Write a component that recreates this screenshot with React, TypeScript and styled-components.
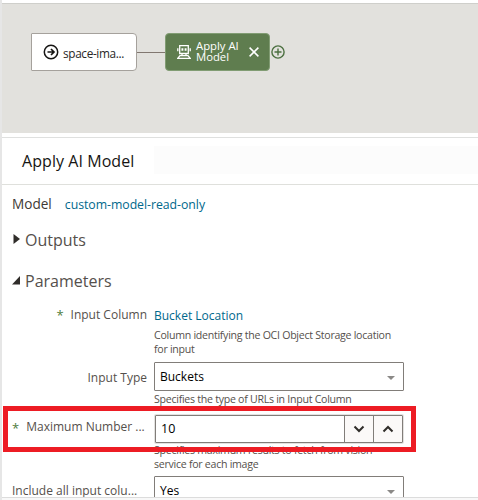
import React from "react";
import styled, { createGlobalStyle } from "styled-components";

const Global = createGlobalStyle`
  * { box-sizing: border-box; }
  body { margin: 0; background: #fff; font-family: "Open Sans", "Noto Sans", sans-serif; }
`;

const Page = styled.main`
  width: 478px;
  height: 500px;
  overflow: hidden;
  display: flex;
  flex-direction: column;
  border-left: 2px solid #e6e6e6;
  background: #fff;
`;

const Text = styled.span<{ $size?: number; $track?: number; $color?: string; $line?: number }>`
  display: block;
  white-space: nowrap;
  font-size: ${(p) => p.$size ?? 12}px;
  letter-spacing: ${(p) => p.$track ?? 0}px;
  color: ${(p) => p.$color ?? "#55504c"};
  line-height: ${(p) => p.$line ?? 18}px;
`;

const HelpText = styled.span`
  display: block;
  white-space: nowrap;
  font-size: 10.6px;
  letter-spacing: -0.27px;
  line-height: 14px;
  color: #55504c;
`;

const Canvas = styled.section`
  flex: none;
  height: 130px;
  margin-top: 3px;
  border-top: 1px solid #cfcfcb;
  background: #e2e1dd;
  display: flex;
  align-items: flex-start;
  padding: 29px 0 0 29px;
`;

const SourceNode = styled.div`
  width: 106px;
  height: 38px;
  border: 1px solid #a5a19c;
  border-radius: 1px 4px 4px 1px;
  background: #fff;
  display: flex;
  align-items: center;
  padding-left: 11px;
  gap: 4px;
`;

const SourceLabel = styled.div`
  padding-top: 2px;
`;

const Connector = styled.div`
  width: 28px;
  height: 1px;
  margin-top: 19px;
  background: #817770;
`;

const ModelNode = styled.div`
  width: 105px;
  height: 38px;
  border: 1px solid #819c73;
  border-radius: 4px;
  background: #5f7d4f;
  display: flex;
  align-items: center;
  padding-left: 11px;
`;

const NodeLabel = styled.div`
  width: 53px;
  margin-left: 5px;
  padding-bottom: 2px;
`;

const AddIcon = styled.div`
  display: flex;
  margin: 12px 0 0 1px;
`;

const TitleBar = styled.header`
  flex: none;
  height: 48px;
  margin-top: 4px;
  border-top: 1px solid #dfe0df;
  border-bottom: 1px solid #dfe0dc;
  display: flex;
  padding: 8px 0 0 20px;
`;

const Title = styled.h1`
  width: 132px;
  margin: 0;
  padding-top: 4px;
  font-weight: 400;
`;

const TitleSpace = styled.div`
  flex: 1;
  height: 28px;
  background: #fcfcfc;
`;

const Panel = styled.section`
  flex: none;
  height: 312px;
  overflow: hidden;
`;

const ModelRow = styled.div`
  height: 39px;
  display: flex;
  gap: 13px;
  padding: 9px 0 0 10px;
`;

const Disclosure = styled.div<{ $height: number }>`
  height: ${(p) => p.$height}px;
  display: flex;
  align-items: flex-start;
  gap: 4px;
  padding: 5px 0 0 10px;
`;

const Field = styled.div<{ $height: number }>`
  height: ${(p) => p.$height}px;
  display: grid;
  grid-template-columns: 145px 250px;
  column-gap: 7px;
  align-content: start;
`;

const Label = styled.div<{ $top: number; $left?: boolean }>`
  display: flex;
  justify-content: ${(p) => (p.$left ? "flex-start" : "flex-end")};
  gap: 7px;
  padding: ${(p) => p.$top}px 0 0 ${(p) => (p.$left ? 10 : 0)}px;
`;

const Control = styled.div`
  height: 29px;
  border: 1px solid #817d79;
  border-radius: 1px;
  background: #fff;
  display: flex;
  align-items: center;
  padding-left: 5px;
`;

const Caret = styled.i`
  margin: 3px 8px 0 auto;
  border: 4px solid transparent;
  border-top-color: #8b8987;
  border-bottom: 0;
`;

const Spinner = styled(Control)`
  height: 28px;
  margin: 0 1px;
  box-shadow: 0 0 0 1px #e3e2e0;
`;

const SpinValue = styled.div`
  flex: 1;
`;

const Step = styled.button`
  width: 29px;
  height: 26px;
  border: 0;
  border-left: 1px solid #817d79;
  background: #fbf9f8;
  display: flex;
  align-items: center;
  justify-content: center;
  padding: 0;
`;

const Help = styled.div<{ $gap: number }>`
  padding-top: ${(p) => p.$gap}px;
`;

const Highlight = styled.div`
  position: absolute;
  left: 3px;
  top: 406px;
  width: 413px;
  height: 46px;
  border: 5px solid #ed1c24;
  pointer-events: none;
`;

const Footer = styled.footer`
  height: 3px;
  border-top: 1px solid #dcdcdc;
  background: #f8f8f8;
`;

const ink = "#161513";
const link = "#00688c";

function Star() {
  return <Text $color="#4f7d3c" $size={13} $line={20}>*</Text>;
}

export default function App() {
  return (
    <Page>
      <Global />
      <Canvas>
        <SourceNode>
          <svg width="16" height="16" viewBox="0 0 16 16" fill="none" stroke={ink} strokeWidth="1.5">
            <circle cx="8" cy="8" r="6.7" />
            <path d="M4.5 8h6M8 5l3 3-3 3" strokeWidth="1.7" />
          </svg>
          <SourceLabel><Text $color="#292725" $size={11.8} $track={-0.35}>space-ima...</Text></SourceLabel>
        </SourceNode>
        <Connector />
        <ModelNode>
          <svg width="14" height="14" viewBox="0 0 14 14" fill="none" stroke="#fff" strokeWidth="1.3">
            <path d="M2.7.7h8.6v7.8H2.7zM.8 3.2v3M13.2 3.2v3M5 8.5v2M9 8.5v2M3 10.7h8l2.2 2.6H.8z" />
            <path d="M5.4 3.2v2.6M8.6 3.2v2.6" strokeWidth="1.9" />
          </svg>
          <NodeLabel>
            <Text $color="#fff" $size={11.3} $line={11}>Apply AI</Text>
            <Text $color="#fff" $size={11.3} $line={11}>Model</Text>
          </NodeLabel>
          <svg width="10" height="10" viewBox="0 0 10 10" fill="none" stroke="#fff" strokeWidth="1.5">
            <path d="M.6.6l8.8 8.8M9.4.6L.6 9.4" />
          </svg>
        </ModelNode>
        <AddIcon>
          <svg width="14" height="14" viewBox="0 0 14 14" fill="none" stroke="#4c7040" strokeWidth="1.4">
            <circle cx="7" cy="7" r="6.1" />
            <path d="M7 3.5v7M3.5 7h7" />
          </svg>
        </AddIcon>
      </Canvas>
      <TitleBar>
        <Title><Text $color={ink} $size={16} $line={22} $track={0.06}>Apply AI Model</Text></Title>
        <TitleSpace />
      </TitleBar>
      <Panel>
        <ModelRow>
          <Text $size={13.6} $color="#3d3935" $line={20}>Model</Text>
          <Text $color={link} $size={12.3} $track={-0.04} $line={21}>custom-model-read-only</Text>
        </ModelRow>
        <Disclosure $height={41}>
          <svg width="9" height="20" viewBox="0 0 9 20"><path d="M1.5 5v10L8 10z" fill="#302d2a" /></svg>
          <Text $size={16} $line={22}>Outputs</Text>
        </Disclosure>
        <Disclosure $height={37}>
          <svg width="9" height="20" viewBox="0 0 9 20"><path d="M8 6v8.5H0z" fill="#302d2a" /></svg>
          <Text $size={16} $line={22}>Parameters</Text>
        </Disclosure>
        <Field $height={60}>
          <Label $top={3}><Star /><Text $line={19}>Input Column</Text></Label>
          <div>
            <Help $gap={5}><Text $color={link}>Bucket Location</Text></Help>
            <Help $gap={3}>
              <HelpText>Column identifying the OCI Object Storage location</HelpText>
              <HelpText>for input</HelpText>
            </Help>
          </div>
        </Field>
        <Field $height={53}>
          <Label $top={6}><Text $line={20}>Input Type</Text></Label>
          <div>
            <Control><Text $color="#000">Buckets</Text><Caret /></Control>
            <Help $gap={1}><HelpText>Specifies the type of URLs in Input Column</HelpText></Help>
          </div>
        </Field>
        <Field $height={61}>
          <Label $top={3} $left><Star /><Text>Maximum Number ...</Text></Label>
          <div>
            <Spinner>
              <SpinValue><Text $color="#000" $size={12.5}>10</Text></SpinValue>
              <Step aria-label="Decrease">
                <svg width="12" height="8" viewBox="0 0 12 8" fill="none" stroke="#302d2a" strokeWidth="2"><path d="M1.5 1.5L6 6l4.5-4.5" /></svg>
              </Step>
              <Step aria-label="Increase">
                <svg width="12" height="8" viewBox="0 0 12 8" fill="none" stroke="#302d2a" strokeWidth="2"><path d="M1.5 6.5L6 2l4.5 4.5" /></svg>
              </Step>
            </Spinner>
            <Help $gap={0}>
              <HelpText>Specifies maximum results to fetch from vision</HelpText>
              <HelpText>service for each image</HelpText>
            </Help>
          </div>
        </Field>
        <Field $height={29}>
          <Label $top={6} $left><Text>Include all input colu...</Text></Label>
          <Control><Text $color="#000">Yes</Text><Caret /></Control>
        </Field>
      </Panel>
      <Footer />
      <Highlight />
    </Page>
  );
}
